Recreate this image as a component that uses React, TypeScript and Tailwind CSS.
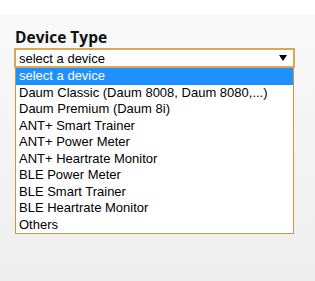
const options = [
  'select a device',
  'Daum Classic (Daum 8008, Daum 8080,...)',
  'Daum Premium (Daum 8i)',
  'ANT+ Smart Trainer',
  'ANT+ Power Meter',
  'ANT+ Heartrate Monitor',
  'BLE Power Meter',
  'BLE Smart Trainer',
  'BLE Heartrate Monitor',
  'Others',
]

export default function App() {
  return (
    <div className="w-[315px] h-[281px] bg-white overflow-hidden">
      <div className="mt-[14px] h-[267px] bg-gradient-to-b from-[#f9f9f9] to-[#eeeeee] pl-[14px] pt-[12px]">
        {/* Label */}
        <div className="font-['Open_Sans',sans-serif] font-bold text-[15.5px] leading-[22px] text-[#111] pl-px">
          Device Type
        </div>

        {/* Select box */}
        <div className="w-[281px] h-[20px] border-2 border-[#d8a855] bg-white flex items-center justify-between pl-[3px] pr-[6px]">
          <span className="font-['Liberation_Sans',Arial,sans-serif] text-[13px] leading-none text-black">
            select a device
          </span>
          <svg width="8" height="6" viewBox="0 0 8 6">
            <path d="M0 0 L8 0 L4 6 Z" fill="#000" />
          </svg>
        </div>

        {/* Open list */}
        <div className="ml-px w-[279px] border border-t-0 border-[#c8973f] bg-white font-['Liberation_Sans',Arial,sans-serif] text-[13px] text-black">
          {options.map((o, i) => (
            <div
              key={o}
              className={`h-[16.5px] leading-[16.5px] pl-[3px] whitespace-nowrap ${i === 0 ? 'bg-[#1e90ff] text-white' : ''}`}
            >
              {o}
            </div>
          ))}
        </div>
      </div>
    </div>
  )
}
